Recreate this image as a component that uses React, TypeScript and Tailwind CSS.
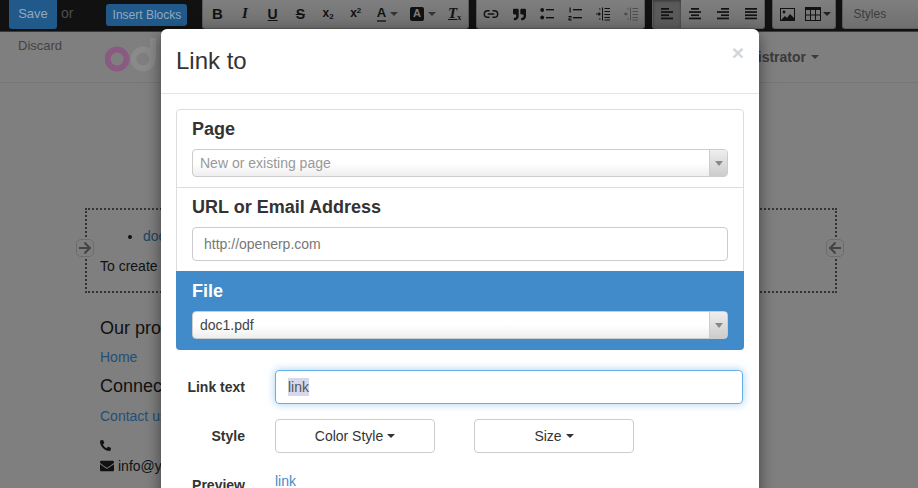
import { ReactNode } from "react";
import { FaArrowLeft, FaArrowRight, FaEnvelope, FaPhoneAlt, FaQuoteRight } from "react-icons/fa";
import { Link2 } from "lucide-react";

function Caret({ className = "" }: { className?: string }) {
  return <span className={`inline-block h-0 w-0 border-x-[4px] border-t-[4px] border-x-transparent ${className}`} />;
}

function ToolBtn({ children, active = false, w = "w-7" }: { children: ReactNode; active?: boolean; w?: string }) {
  return (
    <div className={`flex h-full items-center justify-center text-[#111] ${w} ${active ? "bg-[#5a5a5a] shadow-[inset_0_1px_3px_rgba(0,0,0,.4)]" : ""}`}>
      {children}
    </div>
  );
}

function Group({ children, className = "" }: { children: ReactNode; className?: string }) {
  return (
    <div className={`flex h-[29px] overflow-hidden rounded-b-[3px] border-x border-b border-[#5c5c5c] bg-gradient-to-b from-[#7f7f7f] to-[#6f6f6f] ${className}`}>
      {children}
    </div>
  );
}

// little line icons for the lists and alignment buttons
function Lines({ rows }: { rows: [number, number][] }) {
  return (
    <svg width="14" height="14" viewBox="0 0 14 14" fill="#111">
      {rows.map(([x, w], i) => (
        <rect key={i} x={x} y={1 + i * 3.2} width={w} height="1.7" />
      ))}
    </svg>
  );
}

function Bullets() {
  return (
    <svg width="14" height="14" viewBox="0 0 14 14" fill="#111">
      <circle cx="2.2" cy="3" r="1.9" />
      <circle cx="2.2" cy="10.5" r="1.9" />
      <rect x="6" y="2" width="8" height="1.4" />
      <rect x="6" y="10" width="8" height="1.4" />
    </svg>
  );
}

function Numbered() {
  return (
    <svg width="14" height="14" viewBox="0 0 14 14" fill="#111">
      <rect x="1.5" y="0.5" width="1.2" height="5" />
      <path d="M0.5 9h3v2.2H1.6v1H3.6v1.2H0.5v-2.6h2v-.7H.5z" />
      <rect x="5" y="2" width="9" height="1.4" />
      <rect x="5" y="10" width="9" height="1.4" />
    </svg>
  );
}

function Indent({ out = false }: { out?: boolean }) {
  const c = out ? "#4d4d4d" : "#111";
  return (
    <svg width="14" height="14" viewBox="0 0 14 14" fill={c}>
      <rect x="6" y="0.5" width="1" height="13" />
      {[1, 4, 7, 10, 12.5].map((y) => (
        <rect key={y} x="8.5" y={y} width="5.5" height="1" />
      ))}
      <rect x="0" y="6.5" width="4" height="1" />
      <path d={out ? "M0 7l2.5-2.3v4.6z" : "M5 7L2.5 4.7v4.6z"} />
      <rect x="3" y="1.5" width="1.5" height="1" />
      <rect x="3" y="11.5" width="1.5" height="1" />
    </svg>
  );
}

function Select2({ value, placeholder = false }: { value: string; placeholder?: boolean }) {
  return (
    <div className="flex h-7 items-stretch overflow-hidden rounded-[4px] border border-[#ccc] bg-gradient-to-b from-white from-50% to-[#eee]">
      <span className={`flex-1 pl-[7px] text-sm leading-[26px] ${placeholder ? "text-[#999]" : "text-[#444]"}`}>{value}</span>
      <span className="flex w-[18px] items-center justify-center border-l border-[#ccc] bg-gradient-to-b from-[#eee] to-[#ccc]">
        <Caret className="border-t-[#888] border-x-[3.5px] border-t-[5px]" />
      </span>
    </div>
  );
}

export default function App() {
  return (
    <div className="relative h-[488px] w-[918px] overflow-hidden bg-[#7f7f7f] font-['Liberation_Sans',Arial,sans-serif] text-sm text-[#111]">
      {/* TOP BAR */}
      <div className="flex h-[32px] items-start border-b border-[#3a3a3a] bg-[#111]">
        <div className="ml-[9px] flex h-[29px] w-[48px] items-center justify-center rounded-b-[3px] bg-[#215a8a] text-[13px] text-[#8fa9c0]">
          Save
        </div>
        <span className="ml-1 mt-[3px] text-sm text-[#4d4d4d]">or</span>
        <div className="ml-[33px] mt-1 flex h-[22px] w-[81px] items-center justify-center rounded-[3px] bg-[#215a8a] text-xs text-[#8fa9c0]">
          Insert Blocks
        </div>
        <Group className="ml-[15px] w-[267px]">
          <ToolBtn><span className="text-[15px] font-bold">B</span></ToolBtn>
          <ToolBtn><span className="font-['Liberation_Serif'] text-[15px] font-bold italic">I</span></ToolBtn>
          <ToolBtn><span className="text-[14px] font-bold underline">U</span></ToolBtn>
          <ToolBtn><span className="text-[14px] font-bold line-through">S</span></ToolBtn>
          <ToolBtn><span className="text-[12px] font-bold">x<sub className="text-[8px]">2</sub></span></ToolBtn>
          <ToolBtn><span className="text-[12px] font-bold">x<sup className="text-[8px]">2</sup></span></ToolBtn>
          <ToolBtn w="w-[36px]">
            <span className="border-b-2 border-[#333] text-[13px] leading-[14px] font-bold">A</span>
            <Caret className="ml-1 border-x-[3px] border-t-[3px] border-t-[#333]" />
          </ToolBtn>
          <ToolBtn w="w-[36px]">
            <span className="flex h-[14px] w-[14px] items-center justify-center rounded-[2px] bg-[#111] text-[11px] font-bold text-[#7f7f7f]">A</span>
            <Caret className="ml-1 border-x-[3px] border-t-[3px] border-t-[#333]" />
          </ToolBtn>
          <ToolBtn><span className="font-['Liberation_Serif'] text-[15px] font-bold italic underline">T<sub className="text-[8px] not-italic">x</sub></span></ToolBtn>
        </Group>
        <Group className="ml-[7px] w-[169px]">
          <ToolBtn><Link2 size={16} strokeWidth={2.2} /></ToolBtn>
          <ToolBtn><FaQuoteRight size={13} /></ToolBtn>
          <ToolBtn><Bullets /></ToolBtn>
          <ToolBtn><Numbered /></ToolBtn>
          <ToolBtn><Indent /></ToolBtn>
          <ToolBtn><Indent out /></ToolBtn>
        </Group>
        <Group className="ml-[7px] w-[113px]">
          <ToolBtn active><Lines rows={[[1, 8], [1, 12], [1, 8], [1, 12]]} /></ToolBtn>
          <ToolBtn><Lines rows={[[3, 8], [1, 12], [3, 8], [1, 12]]} /></ToolBtn>
          <ToolBtn><Lines rows={[[5, 8], [1, 12], [5, 8], [1, 12]]} /></ToolBtn>
          <ToolBtn><Lines rows={[[1, 12], [1, 12], [1, 12], [1, 12]]} /></ToolBtn>
        </Group>
        <Group className="ml-[7px] w-[64px]">
          <ToolBtn>
            <svg width="15" height="13" viewBox="0 0 15 13" fill="none">
              <rect x="0.5" y="0.5" width="14" height="12" stroke="#111" />
              <circle cx="4" cy="4" r="1.4" fill="#111" />
              <path d="M1 12l4-4 2 2 3-4 4 4v2z" fill="#111" />
            </svg>
          </ToolBtn>
          <ToolBtn w="w-9">
            <svg width="16" height="14" viewBox="0 0 16 14" fill="none" stroke="#111">
              <rect x="0.5" y="0.5" width="15" height="13" />
              <path d="M0 1.5h16M0 2.5h16M0 8h16M5.5 3v11M10.5 3v11" />
            </svg>
            <Caret className="ml-0.5 border-x-[3px] border-t-[3px] border-t-[#222]" />
          </ToolBtn>
        </Group>
        <Group className="ml-[6px] flex-1 items-center rounded-br-none border-r-0 pl-[10px] text-xs text-[#3d3d3d]">Styles</Group>
      </div>

      {/* NAVBAR */}
      <div className="flex h-[51px] items-start justify-between border-b border-[#767676] pl-[18px] pr-[99px]">
        <div className="flex">
          <span className="mt-[5px] text-[13px] text-[#444]">Discard</span>
          <svg className="ml-[43px] mt-[6px]" width="70" height="38" viewBox="0 0 70 38" fill="none">
            <circle cx="12" cy="21" r="9.5" stroke="#8a5a82" strokeWidth="6" />
            <circle cx="38" cy="21" r="9.5" stroke="#8a8a8a" strokeWidth="6" />
            <path d="M48 0v21" stroke="#8a8a8a" strokeWidth="6" />
          </svg>
        </div>
        <div className="mt-[15px] flex items-center gap-[5px] text-sm font-bold text-[#3a3a3a]">
          Administrator
          <Caret className="border-t-[#3a3a3a]" />
        </div>
      </div>

      {/* PAGE CONTENT */}
      <div className="relative ml-[85px] mt-[125px] h-[85px] w-[752px] border-2 border-dotted border-[#333] px-[13px] pt-[16px]">
        <ul className="ml-[28px] list-disc pl-[15px] leading-5">
          <li className="text-[#111]"><span className="text-[#214565]">doc1.pdf</span></li>
        </ul>
        <p className="mt-[10px] leading-5">To create a link</p>
        <div className="absolute -left-[11px] top-[29px] flex h-[18px] w-[18px] items-center justify-center rounded-[5px] border border-[#6c6c6c] bg-[#7f7f7f] text-[#444]">
          <FaArrowRight size={14} />
        </div>
        <div className="absolute -right-[9px] top-[29px] flex h-[18px] w-[18px] items-center justify-center rounded-[5px] border border-[#6c6c6c] bg-[#7f7f7f] text-[#444]">
          <FaArrowLeft size={14} />
        </div>
      </div>
      <div className="ml-[100px] mt-[25px]">
        <h4 className="text-lg leading-5">Our products</h4>
        <p className="mt-[9px] leading-5 text-[#214f78]">Home</p>
        <h4 className="mt-[9px] text-lg leading-5">Connect with us</h4>
        <p className="mt-[10px] leading-5 text-[#214f78]">Contact us</p>
        <p className="mt-[9px] flex h-5 items-center"><FaPhoneAlt size={11} /></p>
        <p className="mt-[1px] flex h-5 items-center gap-[4px]"><FaEnvelope size={14} />info@yourcompany.example.com</p>
      </div>

      {/* MODAL */}
      <div className="absolute left-[161px] top-[29px] h-[500px] w-[598px] rounded-t-md bg-white text-[#333] shadow-[0_5px_15px_rgba(0,0,0,.5)]">
        <div className="relative h-[65px] border-b border-[#e5e5e5] px-[15px] pt-[15px]">
          <h4 className="text-2xl leading-[34px]">Link to</h4>
          <span className="absolute right-[15px] top-[12px] text-[21px] font-bold leading-6 text-[#d5d5d5]">×</span>
        </div>
        <div className="px-[15px] pt-[15px]">
          <div className="rounded-[4px] border border-[#ddd]">
            <div className="h-[78px] border-b border-[#ddd] px-[15px] pt-[7px]">
              <h3 className="text-lg font-bold leading-[24px]">Page</h3>
              <div className="mt-2"><Select2 value="New or existing page" placeholder /></div>
            </div>
            <div className="h-[83px] px-[15px] pt-[7px]">
              <h3 className="text-lg font-bold leading-[24px]">URL or Email Address</h3>
              <div className="mt-2 h-[34px] rounded-[4px] border border-[#ccc] px-[11px] text-sm leading-8 text-[#777]">http://openerp.com</div>
            </div>
            <div className="-mx-px -mb-px h-[79px] rounded-b-[4px] bg-[#428bca] px-4 pt-[8px]">
              <h3 className="text-lg font-bold leading-[24px] text-white">File</h3>
              <div className="mt-2"><Select2 value="doc1.pdf" /></div>
            </div>
          </div>
          <div className="mt-5 flex items-center">
            <label className="w-[69px] text-right font-bold">Link text</label>
            <div className="ml-[30px] h-[34px] w-[468px] rounded-[4px] border border-[#66afe9] px-3 leading-8 text-[#555] shadow-[0_0_8px_rgba(102,175,233,.6)]">
              <span className="bg-[#d8d8ea] py-px">link</span>
            </div>
          </div>
          <div className="mt-[15px] flex items-center">
            <label className="w-[69px] text-right font-bold">Style</label>
            <div className="ml-[30px] flex h-[34px] w-40 items-center justify-center gap-1 rounded-[4px] border border-[#ccc]">
              Color Style <Caret className="border-t-[#333]" />
            </div>
            <div className="ml-[39px] flex h-[34px] w-40 items-center justify-center gap-1 rounded-[4px] border border-[#ccc]">
              Size <Caret className="border-t-[#333]" />
            </div>
          </div>
          <div className="mt-[17px] flex">
            <label className="mt-[5px] w-[69px] text-right font-bold leading-5">Preview</label>
            <span className="ml-[30px] mt-px leading-5 text-[#428bca]">link</span>
          </div>
        </div>
      </div>
    </div>
  );
}
